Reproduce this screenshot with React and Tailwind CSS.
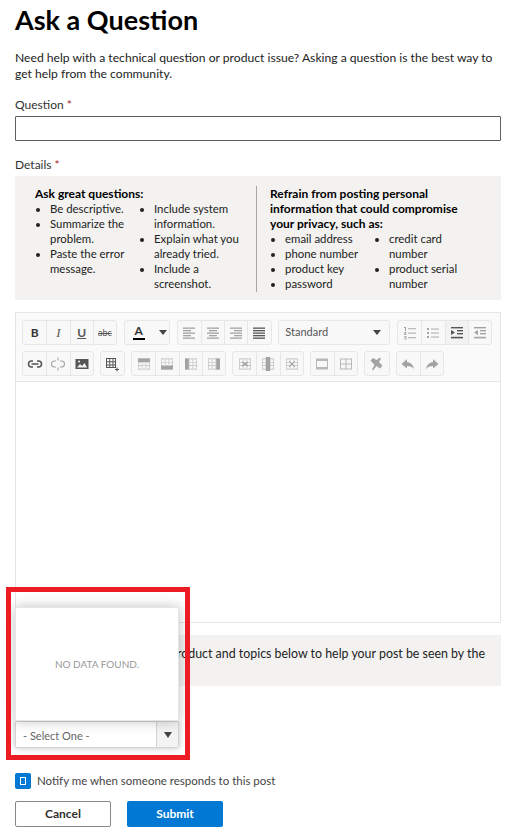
const FONT = "font-['Lato','Noto_Sans',sans-serif]"

function Glyph({ children }) {
    return (
        <svg width="16" height="16" viewBox="0 0 16 16" fill="currentColor">
            {children}
        </svg>
    )
}

// horizontal text lines, x/width per row
function Lines({ rows }) {
    return (
        <Glyph>
            {rows.map(([x, w], i) => (
                <rect key={i} x={x} y={2.5 + i * 2.5} width={w} height="1.3" />
            ))}
        </Glyph>
    )
}

function TableIcon({ children }) {
    return (
        <Glyph>
            <path d="M2 2.5h12v11H2zM2.6 3.2v9.6h10.8V3.2zM2 6h12v.6H2zM2 9.3h12v.6H2zM5.8 3v10h.6V3zM9.6 3v10h.6V3z" opacity=".75" />
            {children}
        </Glyph>
    )
}

const ICONS = {
    left: <Lines rows={[[2, 12], [2, 8], [2, 12], [2, 8], [2, 12]]} />,
    center: <Lines rows={[[2, 12], [4, 8], [2, 12], [4, 8], [2, 12]]} />,
    right: <Lines rows={[[2, 12], [6, 8], [2, 12], [6, 8], [2, 12]]} />,
    justify: <Lines rows={[[2, 12], [2, 12], [2, 12], [2, 12], [2, 12]]} />,
    ol: (
        <Glyph>
            <path d="M2 2h2v4H3V3H2zM2 7h2.4v.8L3 9.2h1.4v.7H2v-.8l1.3-1.4H2zM2 11h2.4v3.5H2v-.7h1.5v-.7H2.5v-.6h1v-.8H2z" />
            <rect x="6" y="3" width="8" height="1.3" opacity=".7" />
            <rect x="6" y="7.5" width="8" height="1.3" opacity=".7" />
            <rect x="6" y="12" width="8" height="1.3" opacity=".7" />
        </Glyph>
    ),
    ul: (
        <Glyph>
            <rect x="2" y="3" width="2" height="2" />
            <rect x="2" y="7" width="2" height="2" />
            <rect x="2" y="11" width="2" height="2" />
            <rect x="6" y="3.4" width="8" height="1.3" opacity=".7" />
            <rect x="6" y="7.4" width="8" height="1.3" opacity=".7" />
            <rect x="6" y="11.4" width="8" height="1.3" opacity=".7" />
        </Glyph>
    ),
    indent: (
        <Glyph>
            <rect x="2" y="2" width="12" height="1.4" />
            <rect x="8" y="5" width="6" height="1.4" />
            <rect x="8" y="8" width="6" height="1.4" />
            <rect x="2" y="11.8" width="12" height="1.6" />
            <path d="M2 5l4 2.5L2 10z" />
        </Glyph>
    ),
    outdent: (
        <Glyph>
            <rect x="2" y="2" width="12" height="1.4" />
            <rect x="8" y="5" width="6" height="1.4" />
            <rect x="8" y="8" width="6" height="1.4" />
            <rect x="2" y="11.8" width="12" height="1.6" />
            <path d="M6 5L2 7.5 6 10z" />
        </Glyph>
    ),
    link: (
        <svg width="16" height="16" viewBox="0 0 16 16" fill="none" stroke="currentColor" strokeWidth="1.5">
            <path d="M6 5H4.5a3 3 0 0 0 0 6H6M10 5h1.5a3 3 0 0 1 0 6H10M4.5 8h7" />
        </svg>
    ),
    unlink: (
        <svg width="16" height="16" viewBox="0 0 16 16" fill="none" stroke="currentColor" strokeWidth="1.1">
            <path d="M6 5H4.5a3 3 0 0 0 0 6H6M10 5h1.5a3 3 0 0 1 0 6H10M8 1.5v3M8 11.5v3" />
        </svg>
    ),
    image: (
        <Glyph>
            <path d="M1.5 3h13v10h-13z" />
            <path d="M3 11.5l3-3.5 2 2 2.5-3 2.5 4.5z" fill="#f5f5f5" />
            <circle cx="5" cy="5.5" r="1" fill="#f5f5f5" />
        </Glyph>
    ),
    tableAdd: (
        <Glyph>
            <path d="M2 2h10v10H2zM3 3v2.3h2.3V3zM6.2 3v2.3h2.3V3zM9.4 3v2.3H11V3zM3 6.2v2.3h2.3V6.2zM6.2 6.2v2.3h2.3V6.2zM9.4 6.2v2.3H11V6.2zM3 9.4V11h2.3V9.4zM6.2 9.4V11h2.3V9.4zM9.4 9.4V11H11V9.4z" fillRule="evenodd" />
            <path d="M12.5 11.5h1V13H15v1h-1.5v1.5h-1V14H11v-1h1.5z" />
        </Glyph>
    ),
    rowAbove: <TableIcon><rect x="2" y="2.5" width="12" height="3.5" /></TableIcon>,
    rowBelow: <TableIcon><rect x="2" y="10" width="12" height="3.5" /></TableIcon>,
    colLeft: <TableIcon><rect x="2" y="2.5" width="3.8" height="11" /></TableIcon>,
    colRight: <TableIcon><rect x="10.2" y="2.5" width="3.8" height="11" /></TableIcon>,
    delRow: <TableIcon><path d="M5 6l6 4M11 6l-6 4" stroke="currentColor" strokeWidth="1.5" /></TableIcon>,
    delCol: <TableIcon><rect x="5.8" y="1" width="4.4" height="14" /></TableIcon>,
    merge: <TableIcon><path d="M5 5l6 6M11 5l-6 6" stroke="currentColor" strokeWidth="1" /></TableIcon>,
    splitH: (
        <Glyph>
            <path d="M2 2.5h12v11H2zM3 5v6h10V5z" fillRule="evenodd" opacity=".75" />
        </Glyph>
    ),
    splitV: (
        <Glyph>
            <path d="M2 2.5h12v11H2zM3 3.5v4h4.5v-4zM8.5 3.5v4H13v-4zM3 8.5v4h4.5v-4zM8.5 8.5v4H13v-4z" fillRule="evenodd" opacity=".75" />
        </Glyph>
    ),
    clear: (
        <Glyph>
            <path d="M1.5 4.5L4 2l3.5 2L11 1.5l1 1L10 6l3.5 3.5-2.5 3L7.5 10 4 14.5l-1-1L5.5 9z" />
        </Glyph>
    ),
    undo: (
        <Glyph>
            <path d="M7 3L1.5 8 7 12.5V10c3 0 5 .7 7 3-.5-3.5-3-6.500-7-7z" />
        </Glyph>
    ),
    redo: (
        <Glyph>
            <path d="M9 3l5.5 5L9 12.5V10c-3 0-5 .7-7 3 .5-3.5 3-6.500 7-7z" />
        </Glyph>
    ),
}

function ToolButton({ children, muted, active }) {
    return (
        <div
            className={`flex items-center justify-center h-[23px] w-[23.25px] border-l border-[#e7e7e7] first:border-l-0 ${active ? 'bg-[#f2f2f2]' : ''} ${muted ? 'text-[#a3a3a3]' : 'text-[#555]'}`}
        >
            {children}
        </div>
    )
}

function ToolGroup({ children }) {
    return (
        <div className="flex bg-[#f8f8f8] border border-[#e7e7e7] rounded-[3px] shrink-0">{children}</div>
    )
}

function Toolbar() {
    return (
        <div className="bg-[#fafafa] border-b border-[#e6e6e6] pl-[6px] pt-[7px] h-[69px]">
            <div className="flex gap-[6.75px]">
                <ToolGroup>
                    <ToolButton><span className="font-bold text-[12px] text-[#333]">B</span></ToolButton>
                    <ToolButton><span className="italic font-['Liberation_Serif',serif] text-[13px]">I</span></ToolButton>
                    <ToolButton><span className="underline font-bold text-[12px]">U</span></ToolButton>
                    <ToolButton><span className="line-through text-[9px]">abc</span></ToolButton>
                </ToolGroup>
                <ToolGroup>
                    <div className="flex items-center w-[44px] h-[23px] pl-[8px] text-[#333]">
                        <span className="flex flex-col items-center w-[12px]">
                            <span className="text-[12px] leading-[12px] font-bold">A</span>
                            <span className="w-[12px] h-[2px] bg-black mt-[1px]" />
                        </span>
                        <span className="ml-[14px] w-0 h-0 border-x-[4px] border-x-transparent border-t-[5px] border-t-[#444]" />
                    </div>
                </ToolGroup>
                <ToolGroup>
                    <ToolButton muted>{ICONS.left}</ToolButton>
                    <ToolButton muted>{ICONS.center}</ToolButton>
                    <ToolButton muted>{ICONS.right}</ToolButton>
                    <ToolButton>{ICONS.justify}</ToolButton>
                </ToolGroup>
                <ToolGroup>
                    <div className="flex items-center justify-between w-[110px] h-[23px] pl-[6px] pr-[8px] text-[11px] text-[#555]">
                        Standard
                        <span className="w-0 h-0 border-x-[4px] border-x-transparent border-t-[5px] border-t-[#444]" />
                    </div>
                </ToolGroup>
                <ToolGroup>
                    <ToolButton muted>{ICONS.ol}</ToolButton>
                    <ToolButton muted>{ICONS.ul}</ToolButton>
                    <ToolButton active>{ICONS.indent}</ToolButton>
                    <ToolButton muted>{ICONS.outdent}</ToolButton>
                </ToolGroup>
            </div>
            <div className="flex gap-[6px] mt-[6px]">
                <ToolGroup>
                    <ToolButton>{ICONS.link}</ToolButton>
                    <ToolButton muted>{ICONS.unlink}</ToolButton>
                    <ToolButton>{ICONS.image}</ToolButton>
                </ToolGroup>
                <ToolGroup>
                    <ToolButton>{ICONS.tableAdd}</ToolButton>
                </ToolGroup>
                <ToolGroup>
                    <ToolButton muted>{ICONS.rowAbove}</ToolButton>
                    <ToolButton muted>{ICONS.rowBelow}</ToolButton>
                    <ToolButton muted>{ICONS.colLeft}</ToolButton>
                    <ToolButton muted>{ICONS.colRight}</ToolButton>
                </ToolGroup>
                <ToolGroup>
                    <ToolButton muted>{ICONS.delRow}</ToolButton>
                    <ToolButton muted>{ICONS.delCol}</ToolButton>
                    <ToolButton muted>{ICONS.merge}</ToolButton>
                </ToolGroup>
                <ToolGroup>
                    <ToolButton muted>{ICONS.splitH}</ToolButton>
                    <ToolButton muted>{ICONS.splitV}</ToolButton>
                </ToolGroup>
                <ToolGroup>
                    <ToolButton muted>{ICONS.clear}</ToolButton>
                </ToolGroup>
                <ToolGroup>
                    <ToolButton muted>{ICONS.undo}</ToolButton>
                    <ToolButton muted>{ICONS.redo}</ToolButton>
                </ToolGroup>
            </div>
        </div>
    )
}

function BulletList({ items, className }) {
    return (
        <ul className={`list-disc pl-[15px] shrink-0 text-[11.4px] ${className}`}>
            {items.map((item) => (
                <li key={item}>{item}</li>
            ))}
        </ul>
    )
}

function App() {
    return (
        <div className={`${FONT} relative w-[509px] h-[838px] overflow-hidden bg-white pl-[15px] pr-[8px] text-[12.15px] text-[#1f1f1f]`}>
            <h1 className="text-[27px] leading-[36px] font-bold text-black mt-[2px]">Ask a Question</h1>
            <p className="mt-[12px] leading-[16px] text-[#222]">
                Need help with a technical question or product issue? Asking a question is the best way to get help from the community.
            </p>
            <div className="mt-[15px] text-[12px] leading-[16px] text-[#333]">
                Question <span className="text-[#a4262c]">*</span>
            </div>
            <input type="text" className="block mt-[3px] w-[486px] h-[25px] bg-white border border-[#605e5c] rounded-[1px]" />
            <div className="mt-[16px] text-[12px] leading-[16px] text-[#333]">
                Details <span className="text-[#a4262c]">*</span>
            </div>

            <div className="flex mt-[3px] h-[124px] bg-[#f3f2f1] pl-[20px] pt-[10px] text-[12px] leading-[15px] text-[#222]">
                <div className="w-[221px] shrink-0">
                    <div className="font-bold text-black">Ask great questions:</div>
                    <div className="flex">
                        <BulletList className="w-[104px]" items={['Be descriptive.', 'Summarize the problem.', 'Paste the error message.']} />
                        <BulletList className="w-[104px]" items={['Include system information.', 'Explain what you already tried.', 'Include a screenshot.']} />
                    </div>
                </div>
                <div className="w-px h-[106px] bg-[#a8a6a4] shrink-0" />
                <div className="pl-[13px]">
                    <div className="font-bold text-black w-[200px]">
                        Refrain from posting personal information that could compromise your privacy, such as:
                    </div>
                    <div className="flex">
                        <BulletList className="w-[104px]" items={['email address', 'phone number', 'product key', 'password']} />
                        <BulletList className="w-[100px]" items={['credit card number', 'product serial number']} />
                    </div>
                </div>
            </div>

            <div className="mt-[12px] h-[311px] border border-[#e6e6e6] bg-white">
                <Toolbar />
            </div>

            <div className="mt-[12px] h-[51px] bg-[#f3f2f1] pt-[11px] pl-[155px] text-[12.4px] leading-[16px] text-[#222]">
                product and topics below to help your post be seen by the
            </div>

            {/* dropdown with its open popup, above the product select */}
            <div className="relative mt-[35px] w-[164px] h-[27px] bg-white border border-[#d4d4d4] rounded-[2px] shadow-[0_0_6px_rgba(0,0,0,0.25)] flex items-center justify-between text-[11px] text-[#666]">
                <span className="pl-[7px] pt-[3px]">- Select One -</span>
                <span className="flex items-center justify-center w-[22px] h-full bg-[#f3f3f3] border-l border-[#d4d4d4]">
                    <span className="w-0 h-0 border-x-[4px] border-x-transparent border-t-[6px] border-t-[#444]" />
                </span>
                <div className="absolute -left-px bottom-[26px] w-[164px] h-[114px] bg-white border border-[#e6e6e6] shadow-[0_0_12px_rgba(0,0,0,0.25)] flex items-center justify-center text-[10px] text-[#999]">
                    NO DATA FOUND.
                </div>
                {/* red annotation box around the dropdown */}
                <div className="absolute -left-[10px] -top-[135px] w-[184px] h-[173px] border-[5px] border-[#ed1c24] pointer-events-none" />
            </div>

            <label className="flex items-center mt-[25px] gap-[6px] text-[11.5px] leading-[16px] text-[#444]">
                <span className="flex items-center justify-center w-[16px] h-[16px] bg-[#0078d4] rounded-[2px]">
                    <span className="w-[6px] h-[8px] border border-white" />
                </span>
                Notify me when someone responds to this post
            </label>

            <div className="flex gap-[16px] mt-[12px]">
                <button type="button" className="w-[96px] h-[26px] bg-white border border-[#8a8886] rounded-[2px] text-[12px] font-bold text-[#323130]">
                    Cancel
                </button>
                <button type="button" className="w-[96px] h-[26px] bg-[#0078d4] rounded-[2px] text-[12px] font-bold text-white">
                    Submit
                </button>
            </div>
        </div>
    )
}

export default App
